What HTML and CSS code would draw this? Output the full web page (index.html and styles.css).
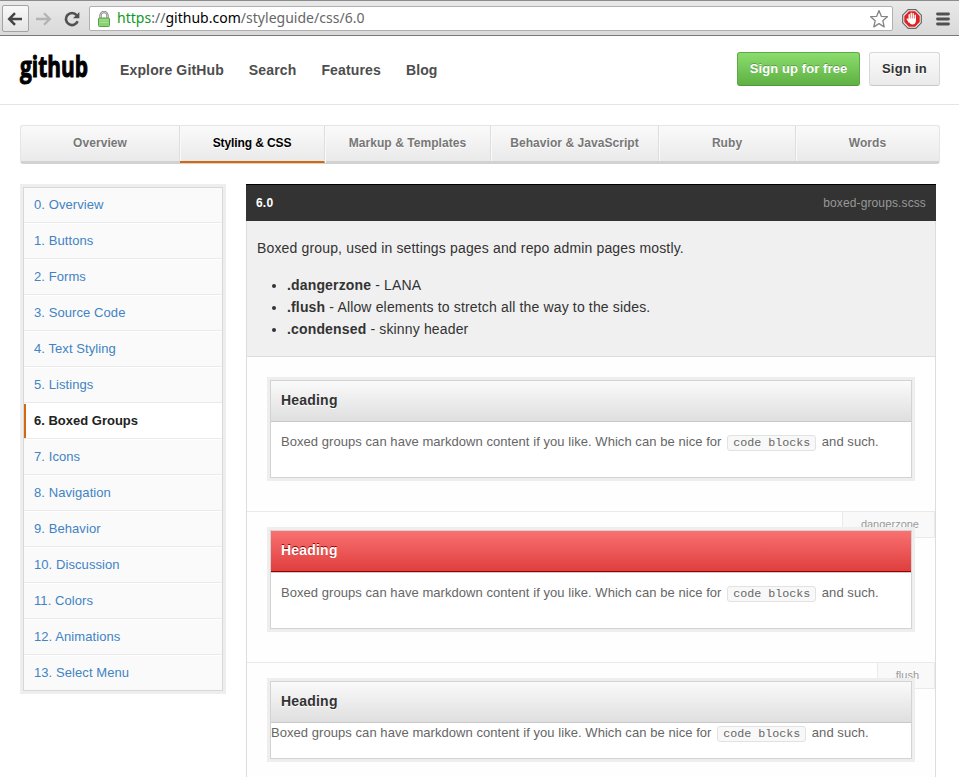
FILE: index.html
```html
<!DOCTYPE html>
<html lang="en">
<head>
<meta charset="utf-8">
<title>Boxed Groups - Styleguide</title>
<link rel="stylesheet" href="styles.css">
</head>
<body>
<div class="browser">
  <span class="back"><svg width="16" height="14" viewBox="0 0 16 14"><path d="M15 7H2.5M8 1.2L2.2 7L8 12.8" fill="none" stroke="#444" stroke-width="2.5"/></svg></span>
  <svg class="forward" width="16" height="14" viewBox="0 0 16 14"><path d="M0 7H13.5M8 1.2L13.8 7L8 12.8" fill="none" stroke="#b3b3b3" stroke-width="2.3"/></svg>
  <svg class="reload" width="16" height="16" viewBox="0 0 16 16"><path d="M13.6 10.2A6 6 0 1 1 12.6 4.2" fill="none" stroke="#505050" stroke-width="2.6"/><path d="M15.4 1V7.2H9z" fill="#505050"/></svg>
  <div class="address">
    <svg class="lock" width="12" height="16" viewBox="0 0 12 16"><path d="M2.5 8V4.5a3.5 3.5 0 0 1 7 0V8" fill="none" stroke="#858585" stroke-width="2.4"/><path d="M2.5 8V4.5a3.5 3.5 0 0 1 7 0V8" fill="none" stroke="#ddd" stroke-width=".8"/><rect x=".5" y="7" width="11" height="8.5" rx="1" fill="#8bd276" stroke="#58a044"/><path d="M1.5 9H10.5M1.5 11.5H10.5" stroke="#a5e292"/></svg>
    <span class="url"><span class="secure">https</span>://<span class="host">github.com</span>/styleguide/css/6.0</span>
    <svg class="star" width="20" height="20" viewBox="0 0 20 20"><path d="M10 1.6L12.3 7.3L18.4 7.7L13.8 11.7L15.2 17.9L10 14.6L4.8 17.9L6.2 11.7L1.6 7.7L7.7 7.3Z" fill="#fff" stroke="#858585" stroke-width="1.3" stroke-linejoin="round"/></svg>
  </div>
  <svg class="blocker" width="20" height="20" viewBox="0 0 20 20"><path d="M6.2.7H13.8L19.3 6.2V13.8L13.8 19.3H6.2L.7 13.8V6.2Z" fill="#eee" stroke="#666" stroke-width="1.2"/><path d="M6.9 2.3H13.1L17.7 6.9V13.1L13.1 17.7H6.9L2.3 13.1V6.9Z" fill="#dc2424"/><path d="M7.2 11V5.8M9.2 10V4.2M11.2 10V4.6M13.2 11V6.2M7 13L5.2 10" stroke="#fff" stroke-width="1.4" stroke-linecap="round"/><path d="M6.5 9.5H13.9V12Q13.5 15.5 10.5 15.5Q8 15.5 6.5 12.5Z" fill="#fff"/></svg>
  <svg class="menu" width="14" height="14" viewBox="0 0 14 14"><path d="M1.5 2H12.5M1.5 7H12.5M1.5 12H12.5" stroke="#505050" stroke-width="2.8" stroke-linecap="round"/></svg>
</div>

<header class="site-header">
  <svg class="logo" width="70" height="36" viewBox="0 0 70 36"><text x="0" y="24.5" textLength="68" lengthAdjust="spacingAndGlyphs">github</text></svg>
  <nav class="site-nav"><a>Explore GitHub</a><a>Search</a><a>Features</a><a>Blog</a></nav>
  <div class="actions"><a class="button primary">Sign up for free</a><a class="button">Sign in</a></div>
</header>

<nav class="tabs"><a>Overview</a><a class="selected">Styling &amp; CSS</a><a>Markup &amp; Templates</a><a>Behavior &amp; JavaScript</a><a>Ruby</a><a>Words</a></nav>

<div class="columns">
  <nav class="side">
    <a>0. Overview</a><a>1. Buttons</a><a>2. Forms</a><a>3. Source Code</a><a>4. Text Styling</a><a>5. Listings</a><a class="current">6. Boxed Groups</a><a>7. Icons</a><a>8. Navigation</a><a>9. Behavior</a><a>10. Discussion</a><a>11. Colors</a><a>12. Animations</a><a>13. Select Menu</a>
  </nav>
  <main class="guide">
    <div class="guide-head"><b>6.0</b><span>boxed-groups.scss</span></div>
    <div class="description">
      <p>Boxed group, used in settings pages and repo admin pages mostly.</p>
      <ul>
        <li><b>.dangerzone</b> - LANA</li>
        <li><b>.flush</b> - Allow elements to stretch all the way to the sides.</li>
        <li><b>.condensed</b> - skinny header</li>
      </ul>
    </div>
    <section class="example first">
      <div class="boxed"><h3>Heading</h3><p>Boxed groups can have markdown content if you like. Which can be nice for <code>code blocks</code> and such.</p></div>
    </section>
    <section class="example">
      <span class="tag">.dangerzone</span>
      <div class="boxed danger"><h3>Heading</h3><p>Boxed groups can have markdown content if you like. Which can be nice for <code>code blocks</code> and such.</p></div>
    </section>
    <section class="example">
      <span class="tag">.flush</span>
      <div class="boxed flush"><h3>Heading</h3><p>Boxed groups can have markdown content if you like. Which can be nice for <code>code blocks</code> and such.</p></div>
    </section>
  </main>
</div>
</body>
</html>
```
FILE: styles.css
```css
* { box-sizing: border-box; }
html { height: 777px; overflow: hidden; }
body { margin: 0; height: 777px; overflow: hidden; background: #fff; color: #333; font: 13px/20px "Liberation Sans", Arial, sans-serif; }
svg { display: block; flex: none; }

.browser { display: flex; align-items: center; height: 36px; padding: 1px 9px 0 2px; border-top: 1px solid #8c8c8c; border-bottom: 1px solid #777; background: linear-gradient(#e9e9e9, #d9d9d9); }
.back { display: flex; align-items: center; justify-content: center; width: 27px; height: 27px; border: 1px solid #a3a3a3; border-radius: 2px; background: linear-gradient(#f9f9f9, #e4e4e4); }
.forward { margin-left: 7px; }
.reload { margin-left: 12px; }
.address { display: flex; align-items: center; width: 805px; height: 25px; margin-left: 9px; padding: 0 3px 0 8px; border: 1px solid #b0b0b0; border-radius: 2px; background: #fff; }
.url { margin: -2px 0 0 7px; font: 14px/20px "Noto Sans", sans-serif; letter-spacing: .02px; color: #666; white-space: nowrap; }
.secure { color: #0b9a1e; }
.host { color: #000; }
.star { margin-left: auto; }
.blocker { margin-left: 9px; }
.menu { margin-left: 14px; }

.site-header { display: flex; align-items: center; height: 69px; padding: 0 19px 1px 20px; border-bottom: 1px solid #e5e5e5; }
.logo { overflow: visible; }
.logo text { font: 700 28px/36px "Open Sans", sans-serif; fill: #000; stroke: #000; stroke-width: 1; }
.site-nav { display: flex; gap: 25px; margin-left: 30px; font-size: 14px; font-weight: bold; color: #4d4d4d; white-space: nowrap; letter-spacing: .14px; }
.actions { display: flex; gap: 9px; margin: -2px 0 0 auto; }
.button { width: 71px; height: 34px; border: 1px solid #d8d8d8; border-bottom-color: #c8c8c8; border-radius: 3px; background: linear-gradient(#fafafa, #eaeaea); color: #333; font-size: 13px; font-weight: bold; line-height: 32px; text-align: center; white-space: nowrap; text-shadow: 0 1px 0 rgba(255,255,255,.9); letter-spacing: .25px; }
.primary { width: 123px; border-color: #5da949; border-bottom-color: #509a3e; background: linear-gradient(#8add6d, #60b044); color: #fff; text-shadow: 0 -1px 0 rgba(0,0,0,.25); letter-spacing: .1px; }

.tabs { display: grid; grid-template-columns: 159px 145px 166px 168px 137px 143px; width: 920px; height: 39px; margin: 20px 0 0 20px; border: 1px solid #e5e5e5; border-bottom: 3px solid #d2d2d2; border-radius: 3px; background: linear-gradient(#fafafa, #eaeaea); }
.tabs a { height: 35px; border-right: 1px solid #dedede; box-shadow: 1px 0 0 #fafafa; color: #777; font-size: 12px; font-weight: bold; line-height: 34px; text-align: center; text-shadow: 0 1px 0 #fff; letter-spacing: .06px; white-space: nowrap; }
.tabs a:last-child { border: 0; box-shadow: none; }
.tabs .selected { height: 37px; border-bottom: 2px solid #d26911; color: #000; letter-spacing: -.1px; }

.columns { display: flex; align-items: flex-start; gap: 23px; padding: 23px 0 0 23px; }
.side { width: 200px; height: 504px; flex: none; border: 1px solid #d8d8d8; background: #fafafa; box-shadow: 0 0 0 3px #eee; overflow: hidden; }
.side a { display: block; height: 36px; padding-left: 10px; border-top: 1px solid #fff; border-bottom: 1px solid #eaeaea; color: #4183c4; line-height: 34px; letter-spacing: .08px; }
.side a:first-child { height: 35px; border-top: 0; }
.side .current { padding-left: 8px; box-shadow: inset 2px 0 0 #d26911; padding-left: 10px; background: #fff; color: #222; font-weight: bold; letter-spacing: 0; }

.guide { width: 690px; height: 620px; margin-top: -3px; border: 1px solid #ddd; border-top: 0; background: #fefefe; }
.guide-head { display: flex; justify-content: space-between; height: 37px; margin: 0 -1px; padding: 0 10px; border-top: 1px solid #000; background: #333; color: #999; font-size: 12px; line-height: 36px; }
.guide-head b { color: #fff; letter-spacing: .2px; }
.guide-head span { letter-spacing: .12px; }
.description { height: 136px; padding: 16px 10px 0; border-bottom: 1px solid #ddd; background: #f0f0f0; font-size: 14px; line-height: 22px; letter-spacing: .155px; }
.description p { margin: 0 0 15px; }
.description ul { margin: 0; padding-left: 30px; }
.example { position: relative; height: 151px; padding: 18px 23px 0; border-top: 1px solid #eaeaea; }
.first { height: 154px; padding-top: 23px; border: 0; }
.tag { position: absolute; top: 0; right: 0; height: 26px; padding: 0 15px; border: solid #eaeaea; border-width: 0 1px 1px; background: #f9f9f9; color: #999; font-size: 11px; line-height: 25px; }
.boxed { position: relative; height: 99px; border: 1px solid #d3d3d3; background: #fff; box-shadow: 0 0 0 3px #eee; color: #666; }
.first .boxed { height: 98px; }
.boxed h3 { height: 41px; margin: 0; padding-left: 10px; border-bottom: 1px solid #c8c8c8; background: linear-gradient(#fafafa, #dfdfdf); color: #333; font-size: 14px; line-height: 39px; text-shadow: 0 1px 0 #fff; letter-spacing: .2px; }
.boxed p { margin: 10px 0 0 10px; white-space: nowrap; letter-spacing: .055px; }
.boxed.danger h3 { margin-bottom: 11px; border-bottom-color: #900; background: linear-gradient(#f97171, #df3e3e); box-shadow: 0 1px 0 #ccc; color: #fff; text-shadow: 0 -1px 0 #900; }
.boxed.flush { height: 78px; }
.boxed.flush p { margin: 0; }
.boxed code { display: inline-block; width: 89px; height: 16px; margin: 0 2px; padding: 0 5px; border: 1px solid #e2e2e2; border-radius: 3px; background: #f8f8f8; font: 11.7px/15px "Liberation Mono", monospace; letter-spacing: 0; }
```
